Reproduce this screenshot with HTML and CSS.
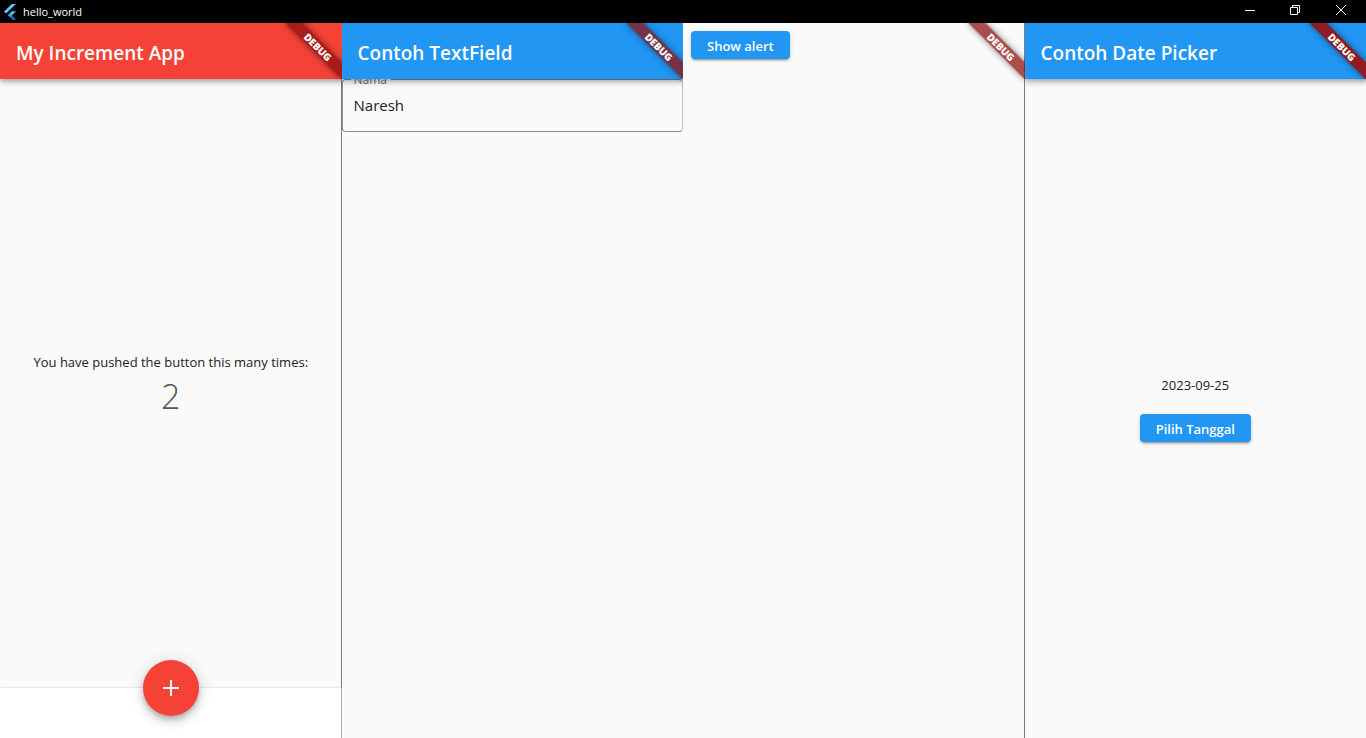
FILE: index.html
```html
<!DOCTYPE html>
<html lang="id">
<head>
<meta charset="utf-8">
<meta name="viewport" content="width=device-width, initial-scale=1">
<title>hello_world</title>
<link rel="stylesheet" href="styles.css">
</head>
<body>
<div class="window">
  <header class="titlebar">
    <svg class="logo" viewBox="0 0 12 16" aria-hidden="true">
      <path d="M7.800 0H12L2.200 9.600L0 7.600Z" fill="#54c5f8"/>
      <path d="M7.800 7.300H12L6.200 13.100L4 11.200Z" fill="#54c5f8"/>
      <path d="M6.100 9.200L8.300 11.200L6.100 13.300L4 11.200Z" fill="#29a6e8"/>
      <path d="M6.100 13.300L8.300 11.300L12 16H8.400Z" fill="#0a66b0"/>
    </svg>
    <span class="window-name">hello_world</span>
    <div class="controls">
      <button class="control" type="button" aria-label="Minimize"><svg viewBox="0 0 11 11"><path d="M1 5.500H11"/></svg></button>
      <button class="control" type="button" aria-label="Restore"><svg viewBox="0 0 11 11"><path d="M0.500 2.500H7.500V9.500H0.500ZM2.500 2.500V0.500H9.500V7.500H7.500"/></svg></button>
      <button class="control" type="button" aria-label="Close"><svg viewBox="0 0 11 11"><path d="M0 0L10 10M10 0L0 10"/></svg></button>
    </div>
  </header>
  <main class="panels">
    <section class="panel divided">
      <div class="appbar red"><h1 class="appbar-title">My Increment App</h1></div>
      <div class="content centered counter">
        <p class="text">You have pushed the button this many times:</p>
        <p class="count">2</p>
      </div>
      <div class="bottombar">
        <button class="fab" type="button" aria-label="Increment"><svg viewBox="0 0 24 24"><path d="M20 13h-7v7h-2v-7H4v-2h7V4h2v7h7z"/></svg></button>
      </div>
      <div class="banner">DEBUG</div>
    </section>
    <section class="panel">
      <div class="appbar"><h1 class="appbar-title">Contoh TextField</h1></div>
      <div class="content">
        <div class="field">
          <label class="field-label" for="nama">Nama</label>
          <input class="field-input" id="nama" type="text" value="Naresh">
        </div>
      </div>
      <div class="banner">DEBUG</div>
    </section>
    <section class="panel divided">
      <div class="content padded"><button class="button" type="button">Show alert</button></div>
      <div class="banner">DEBUG</div>
    </section>
    <section class="panel">
      <div class="appbar"><h1 class="appbar-title">Contoh Date Picker</h1></div>
      <div class="content centered spaced">
        <p class="text">2023-09-25</p>
        <button class="button" type="button">Pilih Tanggal</button>
      </div>
      <div class="banner solid">DEBUG</div>
    </section>
  </main>
</div>
</body>
</html>
```
FILE: styles.css
```css
* {
  box-sizing: border-box;
}

body {
  margin: 0;
  font-family: "Open Sans", "Noto Sans", sans-serif;
  background: #fafafa;
  color: #212121;
}

button,
input {
  font-family: inherit;
}

h1,
p {
  margin: 0;
}

.window {
  display: flex;
  flex-direction: column;
  min-height: 100vh;
}

.titlebar {
  display: flex;
  align-items: center;
  height: 23px;
  padding-left: 4px;
  background: #000;
  color: #fff;
}

.logo {
  width: 12px;
  height: 16px;
  margin-right: 7px;
}

.window-name {
  font-size: 11px;
  line-height: 16px;
}

.controls {
  display: flex;
  align-self: flex-start;
  margin-left: auto;
  padding-right: 2px;
}

.control {
  display: grid;
  place-items: center;
  width: 46px;
  height: 21px;
  padding: 0;
  border: 0;
  background: transparent;
}

.control svg {
  width: 11px;
  height: 11px;
  fill: none;
  stroke: #fff;
}

.panels {
  display: grid;
  grid-template-columns: repeat(4, 1fr);
  flex: 1;
}

.panel {
  position: relative;
  display: flex;
  flex-direction: column;
  min-width: 0;
  overflow: hidden;
}

.divided::after {
  content: "";
  position: absolute;
  top: 0;
  right: 0;
  bottom: 0;
  width: 1px;
  background: #7c7c7c;
}

.appbar {
  position: relative;
  z-index: 1;
  display: flex;
  align-items: center;
  height: 56px;
  padding: 4px 16px 0;
  background: #2196f3;
  color: #fff;
  box-shadow: 0 2px 4px -1px rgba(0, 0, 0, 0.2), 0 4px 5px rgba(0, 0, 0, 0.14), 0 1px 10px rgba(0, 0, 0, 0.12);
}

.red {
  background: #f44336;
}

.appbar-title {
  font-size: 19px;
  font-weight: 600;
  line-height: 28px;
  white-space: nowrap;
}

.content {
  flex: 1;
}

.centered {
  display: flex;
  flex-direction: column;
  align-items: center;
  justify-content: center;
}

.counter {
  gap: 2px;
  padding-top: 4px;
}

.spaced {
  gap: 19px;
}

.padded {
  padding: 8px;
}

.text {
  font-size: 13px;
  line-height: 19px;
}

.count {
  font-size: 34px;
  font-weight: 300;
  line-height: 45px;
  color: #555;
}

.bottombar {
  position: relative;
  z-index: 1;
  display: flex;
  justify-content: center;
  height: 50px;
  background: #fff;
  box-shadow: inset -1px 0 #b0b0b0, 0 0 2px rgba(0, 0, 0, 0.2);
}

.fab {
  display: grid;
  place-items: center;
  width: 56px;
  height: 56px;
  margin-top: -28px;
  padding: 0;
  border: 0;
  border-radius: 50%;
  background: #f44336;
  box-shadow: 0 3px 5px -1px rgba(0, 0, 0, 0.2), 0 6px 10px rgba(0, 0, 0, 0.14), 0 1px 18px rgba(0, 0, 0, 0.12);
}

.fab svg {
  width: 24px;
  height: 24px;
  fill: #fff;
}

.button {
  display: block;
  height: 28px;
  padding: 2px 16px 0;
  border: 0;
  border-radius: 4px;
  background: #2196f3;
  box-shadow: 0 3px 1px -2px rgba(0, 0, 0, 0.2), 0 2px 2px rgba(0, 0, 0, 0.14), 0 1px 5px rgba(0, 0, 0, 0.12);
  color: #fff;
  font-size: 13px;
  font-weight: 600;
  line-height: 20px;
}

.field {
  position: relative;
}

.field-input {
  display: block;
  width: 100%;
  height: 53px;
  padding: 0 11px 2px;
  border: 1px solid #8c8c8c;
  border-right-color: #c0c0c0;
  border-radius: 4px;
  background: transparent;
  color: #212121;
  font-size: 15px;
}

.field-label {
  position: absolute;
  top: -8px;
  left: 9px;
  padding: 0 4px 0 3px;
  background: #fafafa;
  color: #6b6b6b;
  font-size: 12px;
  line-height: 18px;
}

.banner {
  position: absolute;
  z-index: 2;
  top: 28px;
  right: -40px;
  width: 80px;
  height: 12px;
  background: rgba(144, 15, 15, 0.74);
  box-shadow: 0 0 6px rgba(0, 0, 0, 0.5);
  color: #fff;
  font-size: 10px;
  font-weight: 800;
  line-height: 12px;
  text-align: center;
  transform: rotate(45deg);
  transform-origin: 50% -28px;
}

.solid {
  background: #8f1c22;
}
```
